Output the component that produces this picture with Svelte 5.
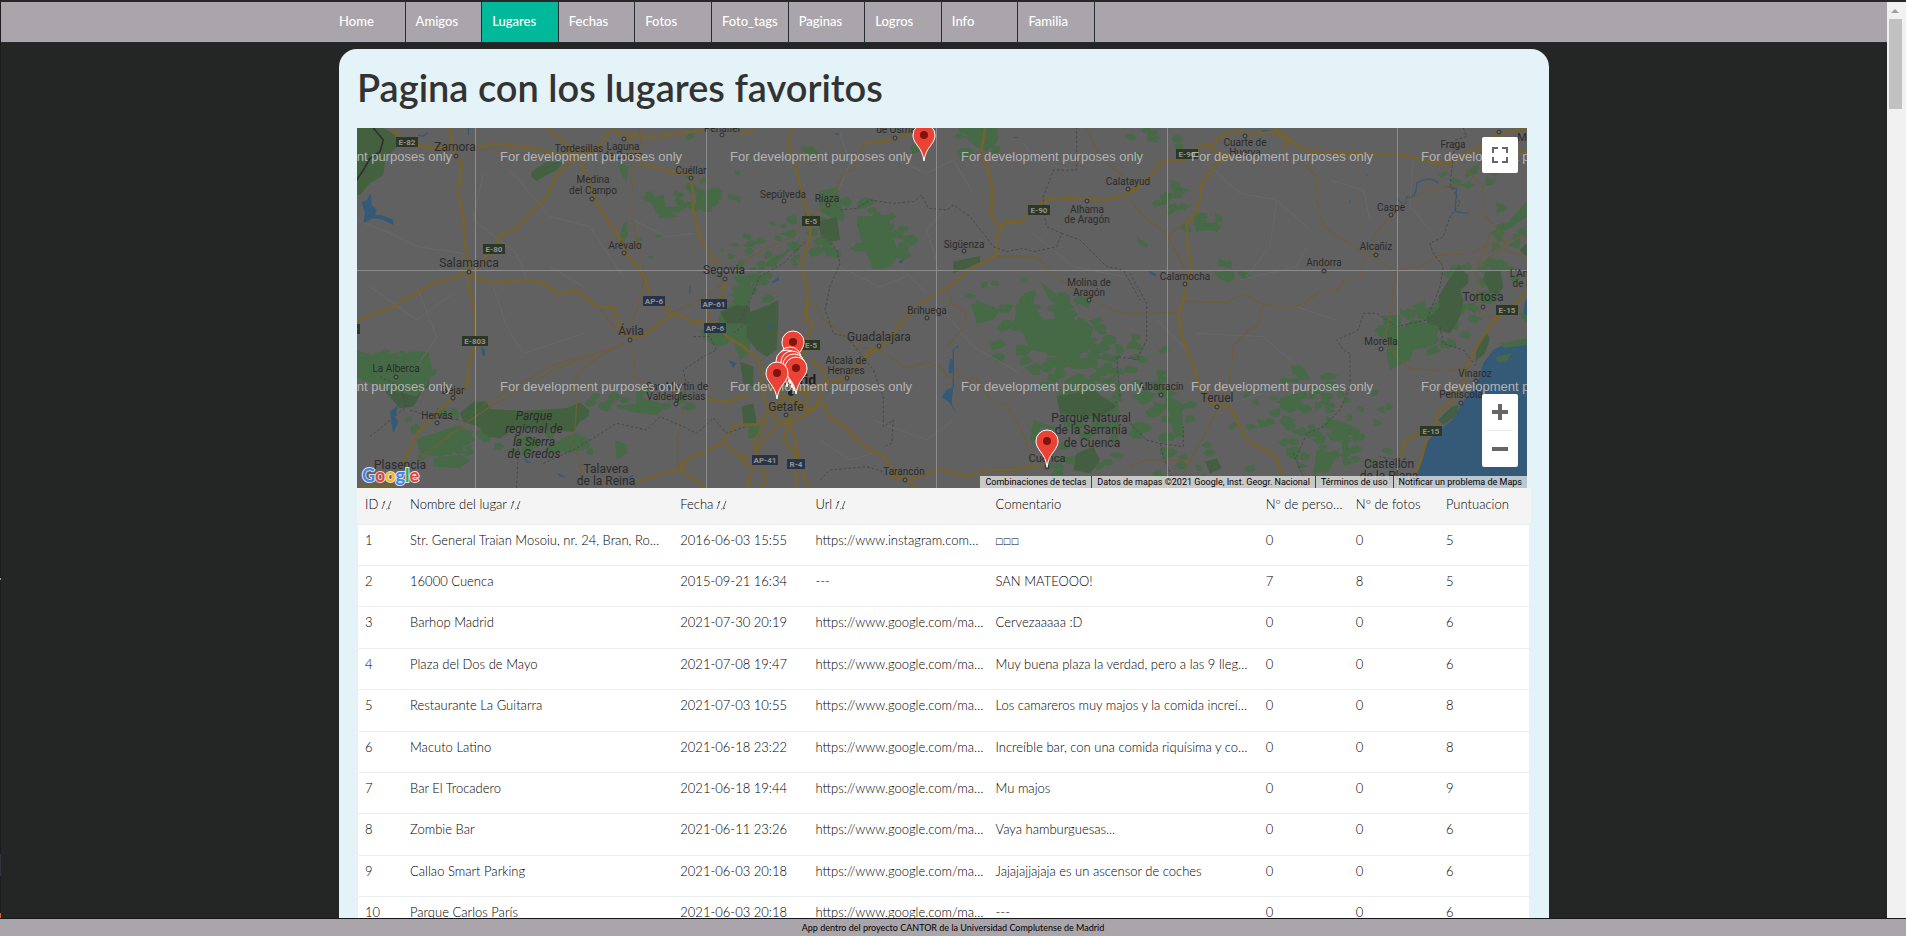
<script>
  const nav = ['Home', 'Amigos', 'Lugares', 'Fechas', 'Fotos', 'Foto_tags', 'Paginas', 'Logros', 'Info', 'Familia'];
  const active = 'Lugares';

  const columns = [
    { label: 'ID', sortable: true },
    { label: 'Nombre del lugar', sortable: true },
    { label: 'Fecha', sortable: true },
    { label: 'Url', sortable: true },
    { label: 'Comentario' },
    { label: 'Nº de personas' },
    { label: 'Nº de fotos' },
    { label: 'Puntuacion' },
  ];

  const maps = 'https://www.google.com/maps/place';
  const rows = [
    [1, 'Str. General Traian Mosoiu, nr. 24, Bran, Romania', '2016-06-03 15:55', 'https://www.instagram.com/p/bran', '□□□', 0, 0, 5],
    [2, '16000 Cuenca', '2015-09-21 16:34', '---', 'SAN MATEOOO!', 7, 8, 5],
    [3, 'Barhop Madrid', '2021-07-30 20:19', maps, 'Cervezaaaaa :D', 0, 0, 6],
    [4, 'Plaza del Dos de Mayo', '2021-07-08 19:47', maps, 'Muy buena plaza la verdad, pero a las 9 llega la policia', 0, 0, 6],
    [5, 'Restaurante La Guitarra', '2021-07-03 10:55', maps, 'Los camareros muy majos y la comida increíble, repetiremos', 0, 0, 8],
    [6, 'Macuto Latino', '2021-06-18 23:22', maps, 'Increíble bar, con una comida riquísima y copas', 0, 0, 8],
    [7, 'Bar El Trocadero', '2021-06-18 19:44', maps, 'Mu majos', 0, 0, 9],
    [8, 'Zombie Bar', '2021-06-11 23:26', maps, 'Vaya hamburguesas...', 0, 0, 6],
    [9, 'Callao Smart Parking', '2021-06-03 20:18', maps, 'Jajajajjajaja es un ascensor de coches', 0, 0, 6],
    [10, 'Parque Carlos París', '2021-06-03 20:18', maps, '---', 0, 0, 6],
  ];

  // Town names: text, x, baseline, size
  const labels = [
    ['Zamora', 98, 23, 12], ['Tordesillas', 222, 24, 10], ['Laguna', 266, 22, 10], ['de Duero', 266, 31, 10],
    ['Cuéllar', 334, 46, 10], ['Peñafiel', 365, 4, 10], ['Medina', 236, 55, 10], ['del Campo', 236, 66, 10],
    ['Arévalo', 268, 121, 10], ['Salamanca', 112, 139, 12], ['Segovia', 367, 146, 12], ['Ávila', 274, 207, 12],
    ['La Alberca', 39, 244, 10], ['Béjar', 96, 266, 10], ['Hervás', 80, 291, 10], ['Talavera', 249, 345, 12],
    ['de la Reina', 249, 357, 12], ['Plasencia', 43, 341, 12], ['San Martín de', 320, 262, 10], ['Valdeiglesias', 319, 272, 10],
    ['de Osma', 539, 5, 10], ['Sepúlveda', 426, 70, 10], ['Riaza', 470, 74, 10], ['Sigüenza', 607, 120, 10],
    ['Calatayud', 771, 57, 10], ['Alhama', 730, 85, 10], ['de Aragón', 730, 95, 10], ['Molina de', 732, 158, 10],
    ['Aragón', 732, 168, 10], ['Brihuega', 570, 186, 10], ['Guadalajara', 522, 213, 12], ['Alcalá de', 489, 236, 10],
    ['Henares', 489, 246, 10], ['Getafe', 429, 283, 12], ['Tarancón', 547, 347, 10], ['Cuenca', 690, 334, 11],
    ['Parque Natural', 734, 294, 12], ['de la Serranía', 734, 306, 12], ['de Cuenca', 735, 319, 12],
    ['Cuarte de', 888, 18, 10], ['Huerva', 888, 28, 10], ['Fraga', 1096, 20, 10], ['Mor', 1170, 13, 11],
    ['Caspe', 1034, 83, 10], ['Alcañiz', 1019, 122, 10], ['Andorra', 967, 138, 10], ['Calamocha', 828, 152, 10],
    ['Tortosa', 1126, 173, 12], ["L'Ametlla", 1173, 149, 10], ['de Mar', 1171, 159, 10], ['Morella', 1024, 217, 10],
    ['Vinaroz', 1118, 249, 10], ['Peñíscola', 1104, 270, 10], ['Teruel', 860, 274, 12], ['Albarracín', 804, 262, 10],
    ['Castellón', 1032, 340, 12], ['de la Plana', 1032, 352, 12],
  ];
  const gredos = [['Parque', 292], ['regional de', 305], ['la Sierra', 318], ['de Gredos', 330]];
  const dots = [
    [99, 28], [267, 11], [334, 50], [365, 7], [235, 71], [267, 125], [112, 144], [368, 151], [273, 212], [39, 249], [96, 270],
    [80, 295], [319, 276], [538, 10], [427, 73], [471, 77], [607, 123], [771, 61], [730, 73], [732, 172], [570, 190],
    [522, 218], [490, 250], [429, 287], [548, 352], [690, 339], [888, 8], [1142, 4], [1034, 87], [1019, 127], [967, 143],
    [828, 156], [1126, 179], [1024, 221], [1119, 253], [1104, 275], [860, 279], [804, 267],
  ];
  const shields = [
    ['E-82', 50, 14], ['E-80', 137, 121], ['E-803', 118, 213], ['E-90', -8, 201], ['E-5', 454, 93], ['E-5', 454, 217], ['E-90', 682, 82],
    ['E-90', 830, 26], ['E-15', 1150, 182], ['E-15', 1074, 303],
    ['AP-6', 297, 173, 1], ['AP-61', 357, 176, 1], ['AP-6', 358, 200, 1], ['AP-41', 408, 332, 1], ['R-4', 439, 336, 1],
  ];
  const shieldWidth = (t) => 6 + t.length * 4;
  const watermarks = [33, 263].flatMap((y) => [-87, 143, 373, 604, 834, 1064].map((x) => [x, y]));
  const pins = [[567, 33], [436, 240], [433, 256], [430, 259], [435, 260], [437, 263], [439, 266], [420, 271], [690, 339]];

  // Woodland clusters: cx, cy, rx, ry, number of patches, patch size
  const woods = [
    [35, 245, 42, 22, 22, 8], [90, 305, 50, 22, 16, 7], [150, 320, 110, 18, 22, 7], [290, 275, 60, 12, 18, 7],
    [300, 74, 34, 16, 10, 7], [355, 65, 30, 18, 11, 7], [395, 160, 24, 14, 12, 8], [405, 130, 40, 30, 22, 6],
    [490, 105, 60, 34, 30, 9], [525, 115, 30, 25, 16, 9], [690, 205, 60, 42, 44, 9], [730, 230, 70, 40, 34, 9],
    [650, 170, 40, 22, 10, 6], [770, 240, 40, 40, 24, 8], [760, 280, 55, 30, 22, 9], [720, 325, 40, 25, 14, 8],
    [560, 20, 14, 14, 4, 8], [625, 12, 26, 18, 10, 9], [820, 70, 26, 14, 8, 7], [845, 95, 20, 10, 7, 8],
    [865, 145, 28, 10, 7, 7], [815, 290, 20, 36, 12, 8], [960, 275, 45, 40, 28, 8], [965, 320, 40, 32, 30, 7],
    [1000, 300, 40, 40, 20, 6], [1060, 205, 40, 24, 30, 9], [1090, 190, 30, 30, 22, 9], [1150, 100, 22, 26, 8, 8],
    [1125, 150, 36, 22, 20, 8], [920, 290, 60, 40, 12, 6], [840, 335, 60, 20, 10, 7], [790, 15, 40, 14, 8, 7],
    [380, 100, 120, 60, 12, 4], [1120, 50, 40, 12, 5, 7],
  ];
  let seed = 7;
  const rand = () => (seed = (seed * 16807) % 2147483647) / 2147483647;
  const patches = woods.flatMap(([cx, cy, rx, ry, n, s]) =>
    Array.from({ length: n }, () => {
      const a = rand() * 6.28;
      const r = Math.sqrt(rand());
      const x = cx + Math.cos(a) * r * rx;
      const y = cy + Math.sin(a) * r * ry;
      return Array.from({ length: 6 }, (_, k) => {
        const t = k * 1.047;
        const q = s * (0.35 + rand() * 0.75);
        return `${(x + Math.cos(t) * q).toFixed(1)},${(y + Math.sin(t) * q * 0.7).toFixed(1)}`;
      }).join(' ');
    })
  );
</script>

<div class="app">
  <div class="scroll">
    <div class="edge"></div>
    <div class="page">
      <nav>
        <ul>
          {#each nav as item}
            <li><a href="#{item}" class:active={item === active}>{item}</a></li>
          {/each}
        </ul>
      </nav>

      <main>
        <h1>Pagina con los lugares favoritos</h1>

        <section class="map" aria-label="Mapa">
          <svg class="canvas" viewBox="0 0 1170 360" preserveAspectRatio="xMidYMid slice">
            <rect width="1170" height="360" fill="#616161" />
            <g fill="#466946">
              {#each patches as p}<polygon points={p} />{/each}
            </g>

            <!-- western third -->
            <g transform="translate(-7 -8) scale(.33333)">
              <g fill="#43603f">
                <path d="M20 24H100L135 45 140 80 105 120 100 165 60 190 30 225 20 225ZM545 155L590 125 640 125 620 150 590 165 560 182 543 170Z" />
                <path d="M100 740L150 725 230 750 240 800 215 815 190 860 150 865 110 820 85 780Z" fill="#445c42" />
                <path d="M330 880L370 845 410 845 420 868 520 872 650 865 690 848 718 870 715 890 690 905 670 935 600 930 500 925 450 955 415 950 385 920 340 905Z" />
              </g>
              <g fill="#466946">
                <path d="M20 690L60 705 90 695 140 715 180 695 235 695 245 740 235 790 200 830 120 810 20 775ZM805 125L835 140 830 185 812 160ZM820 310L832 305 832 350 822 365 810 345Z" />
                <path d="M1105 590L1150 540 1200 480V700L1170 720 1150 660 1110 680 1060 660 1050 630 1110 635Z" />
                <path d="M200 960L280 930 330 915 380 960 330 985 270 1010 210 1000ZM250 1015L330 1005 360 1020 330 1045 250 1040ZM600 975L650 950 680 940 720 960 700 990 650 1000ZM795 960L830 975 830 1000 800 1020ZM810 860L900 840 950 855 920 885 840 875Z" />
                <path d="M895 235L940 225 950 270 985 290 930 295ZM1040 205L1100 215 1105 250 1060 275 1040 260ZM1005 50L1030 35 1035 50 1010 62Z" />
              </g>
              <path d="M1110 575L1160 555 1200 560V610L1130 610Z" fill="#435c40" />
              <path d="M35 245L50 240 62 220 65 255 80 270 75 285 95 285 130 300 130 315 100 300 70 295 40 310 45 280ZM120 875L145 855 135 890 145 905 130 940 125 915ZM1135 720L1160 730 1150 745ZM395 680L405 690 405 708 395 705ZM620 1058L650 1070 630 1070ZM520 1015L545 1028 530 1028Z" fill="#345a78" />
              <path d="M205 45Q220 55 232 38M355 25V45M1020 495V520M820 1085L850 1065" class="river" />
              <g class="faint">
                <path d="M20 300L120 340 200 380 340 400M480 150L600 290 720 320 820 470M400 160L370 300 500 400 530 480M60 500L200 600 310 520M430 500L470 620 520 700 700 640M600 440L700 500M850 300L950 350 1030 340M200 500L260 650 200 740" />
              </g>
              <g class="minor">
                <path d="M820 675Q700 710 610 750Q520 810 420 860Q300 940 200 1025M840 665L855 735 845 765 885 790M820 670L740 715 690 755 670 790 680 850 675 930 660 960 690 1020 695 1100" />
                <path d="M400 85L560 110 700 85 830 80 850 150 842 270 860 350 885 470 862 560 845 610M870 24V100M1000 870L980 960 985 1050M400 855L600 740 720 700M750 565L790 620 820 650M960 580L1050 540 1120 490" />
              </g>
              <g class="road">
                <path d="M298 24L310 90 335 130 325 220 340 290 345 380 357 440 333 467 250 490 130 560 50 590 20 605" />
                <path d="M125 24L160 65 250 85 300 78M380 75L410 80 430 70 500 80 560 85 600 100 680 110M590 24L640 65 690 110 705 160 740 250 805 350 830 400 885 470 900 530 970 580 1030 605 1100 608 1130 650 1180 680 1200 700" />
                <path d="M670 120L620 165 590 230 540 280 495 328 450 345 440 375 400 420 355 470 360 520 372 560 376 680 360 720 350 800 310 830 250 890 205 935 160 1025" />
                <path d="M355 468L430 488 530 480 580 490 625 520 685 512 740 560 790 562 810 620 840 655 880 645 970 580M780 30L750 75 690 110M790 24L800 40 900 52 1000 40 1060 30" />
                <path d="M830 40L870 130 960 155 1025 165 1030 270 1050 350 1090 420 1115 430M1125 485L1115 530 1080 560 1070 600M1065 835L1130 845 1200 825M1200 915L1155 915 1120 965 1060 1000 1015 1015 990 1050 920 1065 860 1085M990 1050L1070 1104M990 1050L1000 1020M1120 965L1200 1040M20 1100L150 1095" />
              </g>
              <path class="border" d="M60 950L170 860 150 800 90 770M180 870L240 890 330 900M580 1030L680 985 760 935 800 910 890 930 930 890 1000 920 1040 940 1090 895 1130 940 1200 915M1030 650L1080 650 1100 690 1060 710 1000 750 1010 800M500 1104L505 980M1150 640L1200 600" />
              <path d="M70 24L100 60 90 95 60 115 40 150 20 180" fill="none" stroke="#303030" stroke-width="5" />
            </g>

            <!-- centre -->
            <g transform="translate(383 -8) scale(.33333)">
              <g fill="#466946">
                <path d="M680 24H770L775 60 740 95 700 75 680 55ZM235 215L290 200 310 280 290 300 240 275ZM350 290L440 285 475 400 450 440 400 450 360 350ZM0 485L40 500 90 415 130 400 190 345 140 400 100 440 60 440 20 530 0 550Z" />
                <path d="M830 570L885 560 910 600 980 590 1060 620 1040 690 980 730 930 700 870 690 850 640 820 620ZM710 540L780 570 760 600 710 610 700 570ZM990 770L1060 780 1080 830 1130 840 1140 880 1040 900 960 880 950 830Z" />
                <path d="M900 485L950 525 985 540 960 565 930 540ZM180 80L220 80 240 105 195 98Z" />
              </g>
              <g fill="#435e41">
                <path d="M20 580L85 555 115 540 115 600 110 690 80 710 50 690 20 650ZM235 305L290 290 300 360 270 365 240 335ZM640 425L720 408 720 430 640 460ZM0 725L40 740 40 800 10 790ZM5 860L40 850 50 910 10 910ZM950 830L1060 810 1130 860 1080 890 960 880ZM1010 1000L1060 980 1080 1020 1050 1060 1000 1050Z" />
                <path d="M25 910L60 920 60 950 25 955ZM985 935L900 920 890 970 870 960 880 900Z" fill="#466946" />
              </g>
              <path d="M95 485L115 470 118 480 100 490ZM80 615L95 610 100 620 85 622ZM475 425L492 415 485 432ZM625 760L630 715 642 720 637 760ZM605 830L620 810 640 800 635 850 650 880 630 850ZM635 690L655 675 655 682Z" fill="#345a78" />
              <path d="M640 800V690M820 52H835M285 42H298" class="river" />
              <g class="faint">
                <path d="M300 40L330 130 300 200M420 100L560 160 640 120 700 220M480 440L560 520M300 440L420 500 500 470M850 70L900 130 1000 150M600 560L700 680 840 760M400 900L560 960 640 900M640 240L560 330 590 420M880 340L1000 440 1150 470M240 960L330 1020 400 1000" />
              </g>
              <g class="minor">
                <path d="M370 70L340 150 310 160 270 250 215 280 150 355 60 395 0 430M770 408L890 410 960 480 1060 540 1130 575 1200 585M200 560L230 555 250 600 320 650 350 680 420 690 500 745 560 725 600 740 625 770 710 775 760 850 800 855 850 940 880 1040M620 500L635 550 680 580 665 630 620 680M1040 24L1080 110 1150 170M320 780L230 800M110 640L180 660" />
              </g>
              <g class="road">
                <path d="M155 24L145 70 175 170 190 240 210 300 210 350 185 430 205 520 195 580 217 610 190 700 170 760 150 818M205 540L195 610" />
                <path d="M370 70L420 65 500 45 530 30M0 40L50 30M735 24L725 90 755 190 755 290 785 325 770 350 768 408 700 440 625 500 540 550 480 610 450 660 380 710 320 770 260 790 170 820" />
                <path d="M785 320L800 305 840 305 870 280 910 240 990 232 1090 240 1160 225 1200 200M150 818L200 870 250 850 270 890 310 915 360 970 430 1010 450 1040 500 1080 530 1070 600 1050 680 1068 740 1050 820 1050 880 1038 920 1040M450 1070L500 1080 530 1104" />
                <path d="M0 670L50 715 70 760 60 800 80 850 110 900 150 910 220 870 260 790 250 750 210 720M0 915L50 915 90 870 150 820M140 890L60 970 20 1104M150 890L130 960 165 1000 170 1104M80 900L40 970 80 1080 60 1104M150 890L210 830 150 790 100 810 60 790M95 870L160 850 220 870M100 780L130 830 200 870M150 900L190 1070 210 1104M0 1000L30 1020M350 740L400 680" />
              </g>
              <path class="border" d="M300 270L350 265 390 240 460 250 520 245 545 225 565 265 620 270 640 255 690 290 730 340 760 380 800 395 850 385 880 395 950 380 965 340 920 320 910 270 910 230 940 150 1010 150 1010 24M240 340L290 390 300 430 270 500 255 570 280 640 320 650 400 750 430 830 430 920 460 900 455 970 430 980M0 600L30 540 60 470 130 430 200 360M240 1080L270 1050 380 1040 430 1055M965 340L1020 360 1100 440 1150 450 1200 540M1140 830L1130 710 1200 720M1060 900L1140 840" />
            </g>

            <!-- eastern third -->
            <g transform="translate(773 -8) scale(.33333)">
              <path d="M1200 520L1185 545 1180 580 1195 610V660L1130 670 1090 690 1060 730 1045 780 1010 830 990 860 965 900 930 930 895 960 875 1010 860 1050 830 1104H1200Z" fill="#345a78" />
              <g fill="#435e41">
                <path d="M1015 465L985 440 950 490 925 530 930 560 890 600 900 625 960 640 990 590 1000 540 990 510 1015 490ZM1065 455L1110 450 1120 500 1105 525 1080 515 1060 480ZM1070 640L1080 655 1065 700 1035 725 1040 690ZM1170 390L1190 370V410ZM965 860L985 855 980 885 940 915 925 900ZM225 1025L260 1015 275 1045 240 1060Z" />
              </g>
              <g fill="#466946">
                <path d="M780 640L860 600 930 620 910 670 850 690 840 720 780 750 770 700ZM1080 340L1130 310 1190 245V290L1150 320 1090 345ZM1100 710L1145 700 1130 725 1100 725ZM500 730L520 740 540 780 500 780ZM450 835L500 820 515 860 480 880 450 865ZM560 990L620 1000 600 1050 550 1060ZM590 940L660 930 640 965 600 960ZM380 895L440 910 390 925ZM120 180L150 190 150 235 130 225ZM90 220L110 230 120 250 95 255ZM190 300L230 300 225 330 200 335ZM240 310L275 315 260 340ZM250 450L310 470 300 490 265 475ZM20 350L55 375 50 385 25 370ZM100 820L155 850 160 950 135 950ZM1010 150L1050 130 1040 160 1005 175ZM1165 580L1190 585V610ZM1115 670L1190 655V675L1120 685Z" />
              </g>
              <path d="M55 450L75 460 80 470 60 462ZM705 158L715 165 712 168Z" fill="#345a78" />
              <path d="M800 235Q830 270 830 230Q860 240 860 190Q900 165 925 190M950 200L980 205 975 275 1015 280M660 240V250M395 33H430" class="river" stroke-width="6" />
              <g class="faint">
                <path d="M230 130L330 220 440 240 420 380 350 470M440 240L540 330M600 180L700 210 720 300M330 480L500 440 530 380M200 640L400 650 480 720M850 120L840 260 900 330M300 850L400 820M500 560L620 600M80 600L180 700" />
              </g>
              <g class="minor">
                <path d="M510 120L560 170 560 240 580 320 640 360 700 395 735 410 800 460 790 500 780 600 765 640 790 700 840 745 950 755 1000 745M165 543L290 548 340 520 390 550 480 565 520 550 570 515 620 510 650 475 690 470 700 420 735 400 730 350 780 290 830 240 900 210 990 190M400 550L385 615 345 640 310 680 300 780 285 850M0 240L40 290 110 340 165 450M110 350L190 290M0 580L140 578M800 450L870 440 930 405 1020 400 1090 370 1190 350M1000 140L1060 200 1060 280 1120 350 1125 390 1190 410M1120 380L1040 440 1050 580 1100 600M260 870L215 960 180 1020 160 1060M0 1040L50 1020 190 1020M1040 450L1080 340" />
              </g>
              <g class="road">
                <path d="M0 215L60 170 100 120 160 120 220 75 240 80 280 45 330 30 350 45 430 35 480 65 540 95 640 100 820 105 920 130 960 130 1050 80 1105 40 1190 24M435 24L480 60 460 85M240 85L300 110 260 130 215 190 210 240 190 290 170 310 170 370 185 440 165 490 160 545 145 580 160 660 190 740 210 800 240 850 300 860 350 960 440 1010 455 1070 450 1104M1105 40L1120 70 1190 100" />
                <path d="M1190 515L1150 560 1100 595 1050 660 1010 740 1000 790 960 850 920 880 915 920 890 960 870 1030 840 1104M1140 560L1085 600M870 940L825 960 810 1010" />
              </g>
              <path class="border" d="M1000 24L1010 50 975 60 970 110 960 190 990 250 960 290 940 350 900 370 910 400 940 440 930 500 890 600 800 620 740 580 700 580 685 630 620 660 640 690 660 700 660 800 630 870 580 920 530 940 500 1010M930 620L940 670 1000 690 1040 740M0 460L50 550 50 660 20 720 0 710M0 910L50 960 90 970 100 1010 130 1080M90 970L160 980 160 920M850 1030L750 1010M520 1070L490 1000" />
            </g>

            <path d="M118.500 0V360M349.500 0V360M579.500 0V360M810.500 0V360M1040.500 0V360M0 142.500H1170" fill="none" stroke="#8c8c8c" />
            {#each dots as [x, y]}
              <circle cx={x} cy={y} r="2" fill="#6d6d6d" stroke="#2b2b2b" />
            {/each}
            <circle cx="434" cy="265" r="3" fill="#222" />
            {#each shields as [t, x, y, blue]}
              <rect x={x - shieldWidth(t) / 2} y={y - 5} width={shieldWidth(t)} height="10" fill={blue ? '#26334a' : '#2c3826'} />
              <text class="shield" {x} y={y + 3}>{t}</text>
            {/each}
            {#each labels as [t, x, y, size]}
              <text class="town" {x} {y} font-size={size}>{t}</text>
            {/each}
            {#each gredos as [t, y]}
              <text class="town" x="177" {y} font-size="12" font-style="italic">{t}</text>
            {/each}
            <text class="town capital" x="437" y="257">Madrid</text>
            {#each watermarks as [x, y]}
              <text class="watermark" {x} {y}>For development purposes only</text>
            {/each}
            {#each pins as [x, y]}
              <g transform="translate({x} {y})">
                <path d="M0 0C-1-7-3-11-7-16C-10-20-11-23-11-26A11 11 0 0 1 11-26C11-23 10-20 7-16C3-11 1-7 0 0Z" fill="#ea4335" stroke="#fff" />
                <circle cy="-26" r="4" fill="#811411" />
              </g>
            {/each}
          </svg>

          <svg class="google" viewBox="0 0 62 24" width="62" height="24" aria-label="Google">
            <text x="1" y="18"><tspan fill="#4285f4">G</tspan><tspan fill="#ea4335">o</tspan><tspan fill="#fbbc04">o</tspan><tspan fill="#4285f4">g</tspan><tspan fill="#34a853">l</tspan><tspan fill="#ea4335">e</tspan></text>
          </svg>

          <button class="full" aria-label="Pantalla completa">
            <svg viewBox="0 0 16 16" width="16" height="16"><path d="M1 6V1H6M10 1H15V6M15 10V15H10M6 15H1V10" fill="none" stroke="#666" stroke-width="2" /></svg>
          </button>
          <div class="zoom">
            <button aria-label="Acercar"><svg viewBox="0 0 16 16" width="16" height="16"><path d="M0 8H16M8 0V16" stroke="#666" stroke-width="4" /></svg></button>
            <button aria-label="Alejar"><svg viewBox="0 0 16 16" width="16" height="16"><path d="M0 8H16" stroke="#666" stroke-width="4" /></svg></button>
          </div>
          <div class="credits">
            <button>Combinaciones de teclas</button>
            <span>Datos de mapas ©2021 Google, Inst. Geogr. Nacional</span>
            <a href="#terminos">Términos de uso</a>
            <a href="#notificar">Notificar un problema de Maps</a>
          </div>
        </section>

        <table>
          <thead>
            <tr>
              {#each columns as col}
                <th scope="col">
                  {col.label}{#if col.sortable}<svg class="sort" viewBox="0 0 11 10" width="11" height="10"><path d="M1 9L4 1L2 3M10 1L7 9L9 8M5 9L6 9" /></svg>{/if}
                </th>
              {/each}
            </tr>
          </thead>
          <tbody>
            {#each rows as row}
              <tr>{#each row as cell}<td>{cell}</td>{/each}</tr>
            {/each}
          </tbody>
        </table>
      </main>
    </div>
    <div class="bar">
      <span class="arrow"></span>
      <span class="thumb"></span>
    </div>
  </div>
  <footer>App dentro del proyecto CANTOR de la Universidad Complutense de Madrid</footer>
</div>

<style>
  :global(body) {
    background: #242625;
  }
  .app {
    display: flex;
    flex-direction: column;
    height: 100vh;
    box-sizing: border-box;
    border-top: 2px solid #2a2627;
    font-family: Lato, "Liberation Sans", sans-serif;
    color: #333;
    background: #242625;
  }
  .scroll {
    flex: 1;
    min-height: 0;
    display: flex;
    overflow: hidden;
  }
  .edge {
    width: 1px;
    background: linear-gradient(#1c1c1c 576px, #999 576px 578px, #1c1c1c 578px 852px, #32343c 852px 874px, #1c1c1c 874px 911px, #d8632c 911px);
  }
  .page {
    flex: 1;
    min-width: 0;
  }
  nav {
    height: 40px;
    background: #aaa5aa;
    border-bottom: 1px solid #272c33;
  }
  ul {
    display: grid;
    grid-template-columns: repeat(10, 1fr);
    box-sizing: border-box;
    max-width: 1230px;
    margin: 0 auto;
    padding: 0 464px 0 0;
    list-style: none;
  }
  li {
    border-right: 1px solid #272c33;
  }
  nav a {
    display: block;
    height: 40px;
    padding: 0 10px;
    line-height: 38px;
    font-size: 13px;
    font-weight: 500;
    color: #fff;
    text-decoration: none;
  }
  nav a.active {
    background: #00b99b;
  }
  main {
    box-sizing: border-box;
    max-width: 1210px;
    margin: 6px auto 0;
    padding: 18px;
    border-radius: 18px;
    background: #e3f3f7;
  }
  h1 {
    margin: 0 0 21px;
    font-size: 38px;
    line-height: 40px;
    font-weight: 600;
  }
  .map {
    position: relative;
    height: 360px;
    margin-right: 4px;
    overflow: hidden;
    background: #616161;
    font-family: Roboto, sans-serif;
  }
  .canvas {
    display: block;
    width: 100%;
    height: 100%;
  }
  .minor, .road, .faint, .river, .border {
    fill: none;
    stroke-linejoin: round;
  }
  .minor {
    stroke: #6d5f3c;
    stroke-width: 4;
  }
  .road {
    stroke: #75622f;
    stroke-width: 8;
  }
  .faint {
    stroke: #686868;
    stroke-width: 3;
  }
  .river {
    stroke: #345a78;
    stroke-width: 4;
  }
  .border {
    stroke: #484848;
    stroke-width: 3;
    stroke-dasharray: 8 6;
  }
  .town {
    fill: #2b2b2b;
    text-anchor: middle;
  }
  .capital {
    font-size: 14px;
    font-weight: 700;
    fill: #1c1c1c;
  }
  .shield {
    fill: #939393;
    font-size: 8px;
    font-weight: 700;
    text-anchor: middle;
  }
  .watermark {
    fill: #b4b4b4;
    font-family: "Liberation Sans", sans-serif;
    font-size: 13px;
  }
  .google {
    position: absolute;
    left: 4px;
    bottom: 0;
  }
  .google text {
    font-family: Lato, sans-serif;
    font-size: 18px;
    font-weight: 700;
    paint-order: stroke;
    stroke: #ddd;
    stroke-width: 2px;
  }
  .map button {
    display: flex;
    align-items: center;
    justify-content: center;
    padding: 0;
    border: 0;
    background: none;
  }
  .map .full, .zoom {
    position: absolute;
    right: 9px;
    width: 36px;
    border-radius: 2px;
    background: #fff;
  }
  .map .full {
    top: 9px;
    height: 36px;
  }
  .zoom {
    bottom: 21px;
  }
  .zoom button {
    width: 36px;
    height: 36px;
  }
  .zoom button + button::before {
    content: "";
    position: absolute;
    top: 36px;
    left: 5px;
    right: 5px;
    height: 1px;
    background: #e6e6e6;
  }
  .zoom button + button {
    height: 37px;
  }
  .credits {
    position: absolute;
    right: 0;
    bottom: 0;
    display: flex;
    height: 12px;
    line-height: 12px;
    font-size: 9px;
    background: rgba(245, 245, 245, 0.7);
  }
  .credits > * {
    padding: 0 5px;
    font: inherit;
    color: #000;
    text-decoration: none;
    white-space: nowrap;
  }
  .map .credits button {
    padding: 0 5px;
  }
  .credits > * + * {
    border-left: 1px solid #444;
  }
  table, thead {
    display: block;
  }
  tbody {
    display: grid;
    grid-auto-rows: 41px 41px 42px 41px 42px;
    margin: 0 2px 0 1px;
    background: #fff;
  }
  tr {
    display: grid;
    grid-template-columns:
      minmax(0, 1fr) minmax(0, 6fr) minmax(0, 3fr) minmax(0, 4fr)
      minmax(0, 6fr) minmax(0, 2fr) minmax(0, 2fr) minmax(0, 2fr);
    box-sizing: border-box;
    border-bottom: 1px solid #ebeeee;
  }
  thead tr {
    height: 37px;
    padding: 0 2px 0 1px;
    background: #f4f4f4;
  }
  th, td {
    padding: 0 5px 0 7px;
    overflow: hidden;
    font-size: 13px;
    font-weight: 300;
    line-height: 32px;
    text-align: left;
    text-overflow: ellipsis;
    white-space: nowrap;
    color: #000;
  }
  td {
    line-height: 31px;
  }
  .sort {
    margin-left: 3px;
    vertical-align: -1px;
    fill: none;
    stroke: #666;
  }
  .bar {
    display: flex;
    flex-direction: column;
    align-items: center;
    width: 19px;
    background: #f1f1f1;
  }
  .arrow {
    margin: 7px 4px 6px 0;
    border: 4px solid transparent;
    border-top: 0;
    border-bottom-color: #a0a0a0;
  }
  .thumb {
    width: 13px;
    height: 90px;
    margin-right: 2px;
    background: #c1c1c1;
  }
  footer {
    height: 17px;
    border-top: 1px solid #15151b;
    background: #aaa5aa;
    font-size: 9px;
    line-height: 17px;
    text-align: center;
    color: #000;
  }
</style>
